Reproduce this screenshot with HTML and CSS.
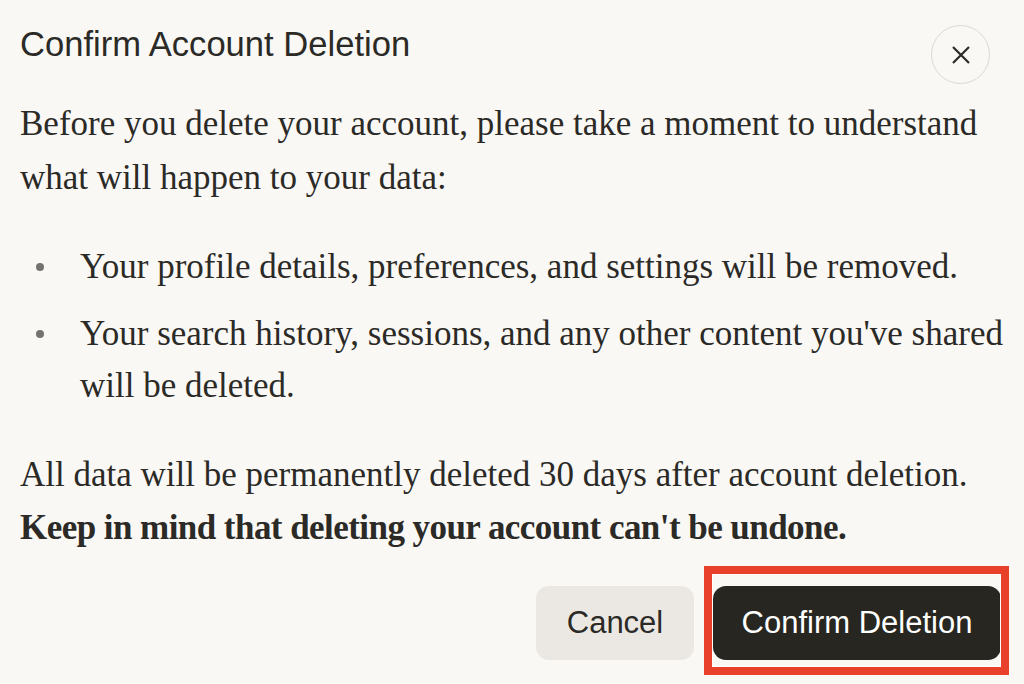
FILE: index.html
```html
<!DOCTYPE html>
<html lang="en">
<head>
<meta charset="utf-8">
<title>Confirm Account Deletion</title>
<link rel="stylesheet" href="styles.css">
</head>
<body>
<div class="dialog">
  <div class="header">
    <h1 class="title">Confirm Account Deletion</h1>
    <button class="close" aria-label="Close">
      <svg width="20" height="20" viewBox="0 0 20 20"><path d="M2 2 L18 18 M18 2 L2 18" stroke="#2b2a26" stroke-width="2.2" stroke-linecap="butt" fill="none"/></svg>
    </button>
  </div>
  <p class="text intro">Before you delete your account, please take a moment to understand what will happen to your data:</p>
  <ul class="list">
    <li class="item">Your profile details, preferences, and settings will be removed.</li>
    <li class="item">Your search history, sessions, and any other content you've shared will be deleted.</li>
  </ul>
  <p class="text outro">All data will be permanently deleted 30 days after account deletion. <strong class="strong">Keep in mind that deleting your account can't be undone.</strong></p>
  <div class="actions">
    <button class="btn btn-cancel">Cancel</button>
    <div class="highlight-wrap">
      <button class="btn btn-confirm">Confirm Deletion</button>
      <span class="highlight"></span>
    </div>
  </div>
</div>
</body>
</html>
```

FILE: styles.css
```css
html, body {
  margin: 0;
  padding: 0;
  background: #f9f8f5;
}
body {
  width: 1024px;
  height: 684px;
  overflow: hidden;
  color: #2b2a26;
}
.dialog {
  padding: 24px 23px 0 20px;
}
.header {
  display: flex;
  justify-content: space-between;
  align-items: flex-start;
  padding-right: 11px;
}
.title {
  margin: 0;
  font-family: "Liberation Sans", Arial, sans-serif;
  font-weight: 400;
  font-size: 34.6px;
  line-height: 40px;
  color: #2b2a26;
}
.close {
  margin-top: 1px;
  width: 59px;
  height: 59px;
  border-radius: 50%;
  border: 1.5px solid #dcd9d4;
  background: transparent;
  display: flex;
  align-items: center;
  justify-content: center;
  padding: 0;
}
.text {
  font-family: "Liberation Serif", "Times New Roman", serif;
  font-size: 35px;
  line-height: 53.5px;
  margin: 0;
}
.intro {
  margin-top: 13px;
  padding-right: 20px;
}
.list {
  list-style: none;
  margin: 37px -16px 0 0;
  padding: 0;
  font-family: "Liberation Serif", "Times New Roman", serif;
  font-size: 35px;
  line-height: 52px;
}
.item {
  position: relative;
  padding-left: 60px;
}
.item + .item {
  margin-top: 15px;
}
.item::before {
  content: "";
  position: absolute;
  left: 16px;
  top: 22px;
  width: 8px;
  height: 8px;
  border-radius: 50%;
  background: #74726d;
}
.outro {
  margin-top: 36px;
  line-height: 53px;
}
.strong {
  display: block;
  font-weight: 700;
  letter-spacing: -0.55px;
}
.actions {
  display: flex;
  justify-content: flex-end;
  gap: 19px;
  margin-top: 32px;
}
.btn {
  font-family: "Liberation Sans", Arial, sans-serif;
  font-size: 31px;
  height: 74px;
  border: none;
  border-radius: 13px;
  padding: 0;
}
.btn-cancel {
  width: 158px;
  background: #ebe8e3;
  color: #2b2a26;
}
.highlight-wrap {
  position: relative;
}
.btn-confirm {
  width: 288px;
  background: #282620;
  color: #ffffff;
  display: block;
}
.highlight {
  position: absolute;
  left: -9px;
  top: -20px;
  right: -8px;
  bottom: -15px;
  border: 8px solid #e8402a;
  box-shadow: inset 0 0 0 1px #ffffff;
  pointer-events: none;
}
```
